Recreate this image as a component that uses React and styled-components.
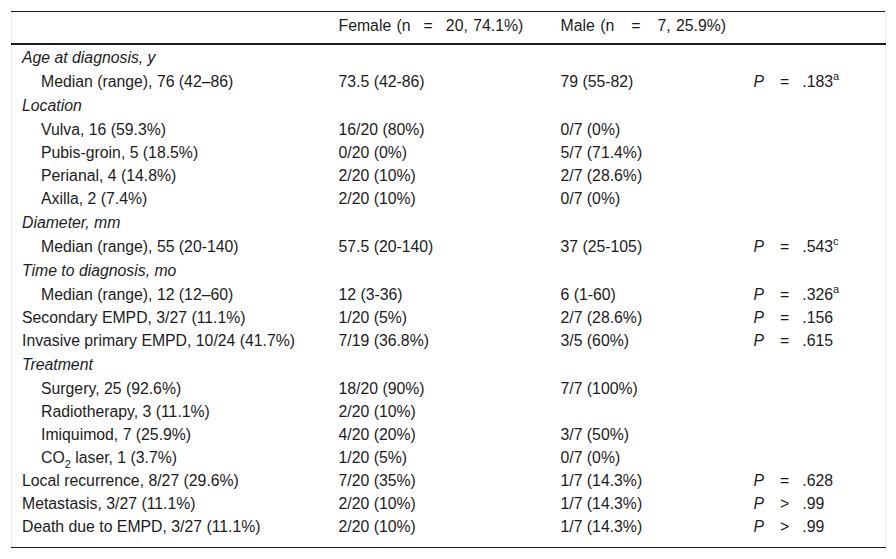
import React from 'react';
import styled, { createGlobalStyle } from 'styled-components';

const GlobalStyle = createGlobalStyle`
  body {
    margin: 0;
    background: #fff;
    font-family: "Liberation Sans", Arial, sans-serif;
    color: #1c1c1c;
  }
`;

const Page = styled.div`
  padding: 11px 0 0 11px;
`;

const Table = styled.table`
  border-collapse: collapse;
  table-layout: fixed;
  width: 874px;
  font-size: 15.8px;
  line-height: 19px;
  border-top: 1px solid #1c1c1c;
  border-bottom: 1px solid #1c1c1c;
  border-left: 1px solid #ececec;
  border-right: 1px solid #ececec;
`;

const HeadCell = styled.th`
  font-weight: normal;
  text-align: left;
  padding: 4px 8px 8px;
  border-bottom: 2px solid #1c1c1c;
  white-space: nowrap;
  word-spacing: 1px;
`;

const Cell = styled.td`
  padding: ${(p) => (p.$last ? '2px 8px 11px' : '2px 8px')};
  padding-left: ${(p) => (p.$indent ? '29px' : p.$first ? '10px' : '8px')};
  white-space: nowrap;
  vertical-align: top;
`;

const GroupCell = styled.td`
  padding: 3px 8px 3px 10px;
  font-style: italic;
`;

const Eq = styled.span`
  display: inline-block;
  margin: 0 ${(p) => p.$gap || 14}px;
`;

const PVal = styled.span`
  font-style: italic;
`;

const Op = styled.span`
  display: inline-block;
  margin: 0 13px 0 16px;
`;

const Sup = styled.sup`
  font-size: 11px;
  line-height: 0;
  vertical-align: 7px;
`;

const Sub = styled.sub`
  font-size: 11px;
  line-height: 0;
  vertical-align: -5px;
`;

const rows = [
  { group: 'Age at diagnosis, y' },
  { indent: true, label: 'Median (range), 76 (42–86)', f: '73.5 (42-86)', m: '79 (55-82)', p: ['=', '.183', 'a'] },
  { group: 'Location' },
  { indent: true, label: 'Vulva, 16 (59.3%)', f: '16/20 (80%)', m: '0/7 (0%)' },
  { indent: true, label: 'Pubis-groin, 5 (18.5%)', f: '0/20 (0%)', m: '5/7 (71.4%)' },
  { indent: true, label: 'Perianal, 4 (14.8%)', f: '2/20 (10%)', m: '2/7 (28.6%)' },
  { indent: true, label: 'Axilla, 2 (7.4%)', f: '2/20 (10%)', m: '0/7 (0%)' },
  { group: 'Diameter, mm' },
  { indent: true, label: 'Median (range), 55 (20-140)', f: '57.5 (20-140)', m: '37 (25-105)', p: ['=', '.543', 'c'] },
  { group: 'Time to diagnosis, mo' },
  { indent: true, label: 'Median (range), 12 (12–60)', f: '12 (3-36)', m: '6 (1-60)', p: ['=', '.326', 'a'] },
  { label: 'Secondary EMPD, 3/27 (11.1%)', f: '1/20 (5%)', m: '2/7 (28.6%)', p: ['=', '.156'] },
  { label: 'Invasive primary EMPD, 10/24 (41.7%)', f: '7/19 (36.8%)', m: '3/5 (60%)', p: ['=', '.615'] },
  { group: 'Treatment' },
  { indent: true, label: 'Surgery, 25 (92.6%)', f: '18/20 (90%)', m: '7/7 (100%)' },
  { indent: true, label: 'Radiotherapy, 3 (11.1%)', f: '2/20 (10%)', m: '' },
  { indent: true, label: 'Imiquimod, 7 (25.9%)', f: '4/20 (20%)', m: '3/7 (50%)' },
  { indent: true, label: <>CO<Sub>2</Sub> laser, 1 (3.7%)</>, f: '1/20 (5%)', m: '0/7 (0%)' },
  { label: 'Local recurrence, 8/27 (29.6%)', f: '7/20 (35%)', m: '1/7 (14.3%)', p: ['=', '.628'] },
  { label: 'Metastasis, 3/27 (11.1%)', f: '2/20 (10%)', m: '1/7 (14.3%)', p: ['>', '.99'] },
  { label: 'Death due to EMPD, 3/27 (11.1%)', f: '2/20 (10%)', m: '1/7 (14.3%)', p: ['>', '.99'] },
];

const App = () => (
  <Page>
    <GlobalStyle />
    <Table>
      <colgroup>
        <col style={{ width: 319 }} />
        <col style={{ width: 222 }} />
        <col style={{ width: 193 }} />
        <col style={{ width: 140 }} />
      </colgroup>
      <thead>
        <tr>
          <HeadCell />
          <HeadCell>Female (n<Eq $gap={13}>=</Eq>20, 74.1%)</HeadCell>
          <HeadCell>Male (n<Eq $gap={17}>=</Eq>7, 25.9%)</HeadCell>
          <HeadCell />
        </tr>
      </thead>
      <tbody>
        {rows.map((r, i) => {
          const last = i === rows.length - 1;
          if (r.group) {
            return (
              <tr key={i}>
                <GroupCell colSpan={4}>{r.group}</GroupCell>
              </tr>
            );
          }
          return (
            <tr key={i}>
              <Cell $first $indent={r.indent} $last={last}>{r.label}</Cell>
              <Cell $last={last}>{r.f}</Cell>
              <Cell $last={last}>{r.m}</Cell>
              <Cell $last={last}>
                {r.p && (
                  <>
                    <PVal>P</PVal>
                    <Op>{r.p[0]}</Op>
                    {r.p[1]}
                    {r.p[2] && <Sup>{r.p[2]}</Sup>}
                  </>
                )}
              </Cell>
            </tr>
          );
        })}
      </tbody>
    </Table>
  </Page>
);

export default App;
